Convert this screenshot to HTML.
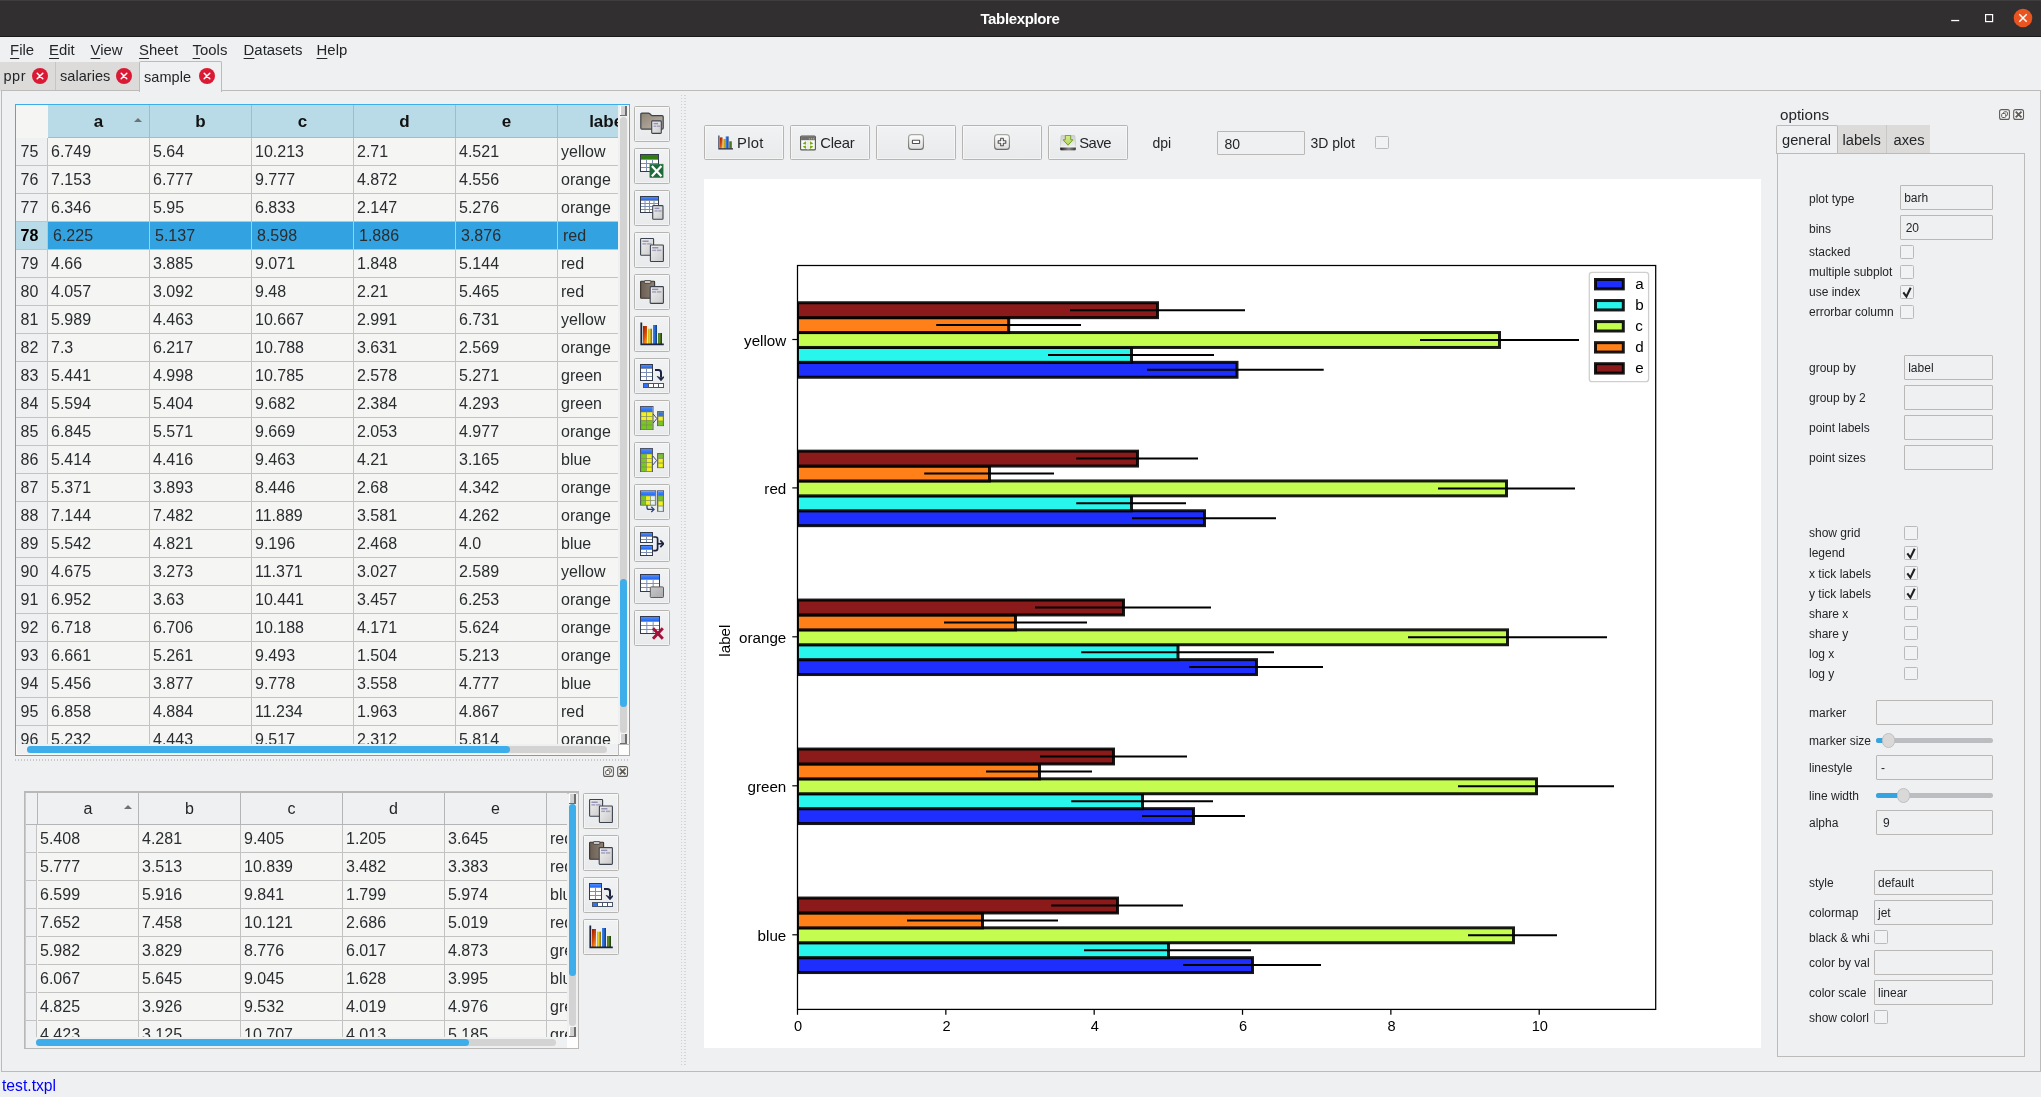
<!DOCTYPE html><html><head><meta charset="utf-8"><title>Tablexplore</title><style>
html,body{margin:0;padding:0;}
body{width:2041px;height:1097px;position:relative;overflow:hidden;background:#eff0f1;font-family:"Liberation Sans",sans-serif;color:#232629;}
div{position:absolute;box-sizing:content-box;}
.abs{position:absolute;}
.clip{overflow:hidden;}
.t{position:absolute;white-space:nowrap;line-height:1.15;}
#titlebar{left:0;top:0;width:2041px;height:36px;background:#312f30;border-bottom:1px solid #1b1a1b;box-shadow:inset 0 1px 0 0 #3f3d3e;}
#title{left:0;width:2040px;top:9.5px;text-align:center;color:#fff;font-weight:bold;font-size:15px;line-height:18px;letter-spacing:-0.35px;}
.menu{font-size:14.9px;color:#232629;}
.menu u{text-decoration-thickness:1px;text-underline-offset:2.6px;}
.tab{font-size:14.5px;color:#232629;}
.th{position:absolute;text-align:center;border-right:1px solid #b4b5b6;border-bottom:1px solid #b4b5b6;color:#111;overflow:hidden;}
.th.main{font-weight:bold;font-size:17px;}
.th.sub{font-size:16px;color:#232629;}
.td{position:absolute;font-size:16px;line-height:28px;border-right:1px solid #c3c3c3;border-bottom:1px solid #c3c3c3;box-sizing:border-box;color:#2a2d30;white-space:nowrap;overflow:hidden;}
.rh{position:absolute;font-size:16px;line-height:28px;border-right:1px solid #c3c3c3;border-bottom:1px solid #c3c3c3;text-align:left;padding-left:4.6px;box-sizing:border-box;color:#2a2d30;}
.rh.b{font-weight:bold;color:#000;}
.tbtn{background:linear-gradient(#f1f2f3,#e9eaeb);border:1px solid #b7b5b2;border-radius:1.5px;box-shadow:inset 0 0 0 1px rgba(255,255,255,0.45);box-sizing:border-box;}
.pbtn{background:linear-gradient(#f1f2f3,#e9eaeb);border:1px solid #b7b5b2;border-radius:1.5px;box-shadow:inset 0 0 0 1px rgba(255,255,255,0.45);box-sizing:border-box;}
.pbt{font-size:14.8px;color:#232629;}
.opt{font-size:12px;color:#232629;}
.opt2{font-size:14px;color:#232629;}
.optitle{font-size:15.2px;color:#232629;}
.otab{font-size:14.7px;color:#232629;}
.field{border:1px solid #b9b8b6;background:#eff0f1;box-sizing:border-box;border-radius:1px;}
.field span{position:absolute;top:1px;bottom:0;font-size:12px;line-height:22px;color:#232629;white-space:nowrap;}
.chk{border:1px solid #b9babb;background:#f1f2f3;box-sizing:border-box;border-radius:1.5px;}
.status{font-size:15.7px;color:#0000ff;}
svg{display:block;}
svg text{font-family:"Liberation Sans",sans-serif;}
#wrap{left:0;top:0;width:2041px;height:1097px;will-change:transform;}

</style></head><body><div id="wrap">
<svg width="0" height="0" style="position:absolute;left:0;top:0"><defs><linearGradient id="gbh" x1="0" y1="0" x2="0" y2="1"><stop offset="0" stop-color="#4f8dfb"/><stop offset="1" stop-color="#1f63f0"/></linearGradient><linearGradient id="gdoc" x1="0" y1="0" x2="1" y2="1"><stop offset="0" stop-color="#f1f1f1"/><stop offset="1" stop-color="#c9c9c9"/></linearGradient><linearGradient id="gfold" x1="0" y1="0" x2="1" y2="1"><stop offset="0" stop-color="#8f8272"/><stop offset="1" stop-color="#bcb6ad"/></linearGradient><linearGradient id="gclip" x1="0" y1="0" x2="1" y2="0"><stop offset="0" stop-color="#6a5d52"/><stop offset="1" stop-color="#8e8074"/></linearGradient><linearGradient id="gred" x1="0.2" y1="0" x2="0.8" y2="1"><stop offset="0" stop-color="#a32200"/><stop offset="0.55" stop-color="#d8500a"/><stop offset="1" stop-color="#fba31c"/></linearGradient><linearGradient id="gyel" x1="0" y1="0" x2="1" y2="0"><stop offset="0" stop-color="#c8b418"/><stop offset="0.35" stop-color="#e8d02a"/><stop offset="1" stop-color="#7a6a10"/></linearGradient><linearGradient id="gblu" x1="0" y1="0" x2="1" y2="0"><stop offset="0" stop-color="#3a80e8"/><stop offset="0.4" stop-color="#2a6fd8"/><stop offset="1" stop-color="#123a80"/></linearGradient><linearGradient id="ggrn" x1="0" y1="0" x2="1" y2="0"><stop offset="0" stop-color="#4a7a20"/><stop offset="0.4" stop-color="#5a8a28"/><stop offset="1" stop-color="#1c3208"/></linearGradient><linearGradient id="ggray" x1="0" y1="0" x2="1" y2="1"><stop offset="0" stop-color="#c9c9cb"/><stop offset="1" stop-color="#a9a9ab"/></linearGradient><linearGradient id="gbtn" x1="0" y1="0" x2="0" y2="1"><stop offset="0" stop-color="#ffffff"/><stop offset="1" stop-color="#dcdcdc"/></linearGradient><linearGradient id="gsave" x1="0" y1="0" x2="0" y2="1"><stop offset="0" stop-color="#dcea8e"/><stop offset="1" stop-color="#b4d65c"/></linearGradient><linearGradient id="gdrv" x1="0" y1="0" x2="0" y2="1"><stop offset="0" stop-color="#cfcfcf"/><stop offset="0.7" stop-color="#ececec"/><stop offset="1" stop-color="#dddddd"/></linearGradient><linearGradient id="gdrvb" x1="0" y1="0" x2="1" y2="0"><stop offset="0" stop-color="#1e1e1e"/><stop offset="0.55" stop-color="#8a8a8a"/><stop offset="1" stop-color="#3a3a3a"/></linearGradient><linearGradient id="gbtns" x1="0" y1="0" x2="0" y2="1"><stop offset="0" stop-color="#a9a9a4"/><stop offset="1" stop-color="#6a6a64"/></linearGradient></defs></svg>
<div id="titlebar"><div id="title">Tablexplore</div>
<svg class="abs" style="left:1945px;top:4px" width="96" height="30" viewBox="0 0 96 30"><rect x="6.2" y="15.9" width="8" height="1.3" fill="#fff"/><rect x="40.6" y="10.6" width="7" height="7" fill="none" stroke="#fff" stroke-width="1.2"/><circle cx="78" cy="14" r="9.3" fill="#e95420"/><path d="M74.3 10.3 L81.7 17.7 M81.7 10.3 L74.3 17.7" stroke="#fff" stroke-width="1.5" fill="none"/></svg></div>
<div class="t menu" style="left:10.1px;top:42.2px"><u>F</u>ile</div>
<div class="t menu" style="left:49.1px;top:42.2px"><u>E</u>dit</div>
<div class="t menu" style="left:90.6px;top:42.2px"><u>V</u>iew</div>
<div class="t menu" style="left:139.1px;top:42.2px"><u>S</u>heet</div>
<div class="t menu" style="left:192.6px;top:42.2px"><u>T</u>ools</div>
<div class="t menu" style="left:243.6px;top:42.2px"><u>D</u>atasets</div>
<div class="t menu" style="left:316.6px;top:42.2px"><u>H</u>elp</div>
<div style="left:0px;top:62px;width:55px;height:28.5px;background:#dcdbd9;border-right:1px solid #c6c5c3;"></div>
<div style="left:56px;top:62px;width:83px;height:28.5px;background:#dcdbd9;"></div>
<div style="left:1px;top:90px;width:2038px;height:980px;border:1px solid #bcbbb9;background:#eff0f1;"></div>
<div style="left:139px;top:61px;width:80.5px;height:30px;background:#eff0f1;border:1px solid #bcbbb9;border-bottom:none;border-radius:2px 2px 0 0;"></div>
<div class="t tab" style="left:3.5px;top:68.2px;letter-spacing:0.5px">ppr</div>
<div class="t tab" style="left:60.0px;top:68.2px;letter-spacing:0.05px">salaries</div>
<div class="t tab" style="left:144.0px;top:69.2px;letter-spacing:0.05px">sample</div>
<svg class="abs" style="left:31px;top:67.2px" width="18" height="18" viewBox="0 0 18 18"><circle cx="9" cy="9" r="8" fill="#da1a34"/><path d="M6.2 6.2 L11.8 11.8 M11.8 6.2 L6.2 11.8" stroke="#fff" stroke-width="1.5" stroke-linecap="round" fill="none"/></svg>
<svg class="abs" style="left:115px;top:67.2px" width="18" height="18" viewBox="0 0 18 18"><circle cx="9" cy="9" r="8" fill="#da1a34"/><path d="M6.2 6.2 L11.8 11.8 M11.8 6.2 L6.2 11.8" stroke="#fff" stroke-width="1.5" stroke-linecap="round" fill="none"/></svg>
<svg class="abs" style="left:198px;top:67.2px" width="18" height="18" viewBox="0 0 18 18"><circle cx="9" cy="9" r="8" fill="#da1a34"/><path d="M6.2 6.2 L11.8 11.8 M11.8 6.2 L6.2 11.8" stroke="#fff" stroke-width="1.5" stroke-linecap="round" fill="none"/></svg>
<div class="abs" style="left:15px;top:104px;width:613px;height:650px;border:1px solid #3daee9;background:#eff0f1;box-shadow:inset 0 0 0 1px #fbf7f4;"></div>
<div class="abs clip" style="left:16px;top:105px;width:602px;height:639px;background:#f5f5f4;">
<div class="abs" style="left:0;top:0;width:32px;height:33px;background:#f5f5f4;"></div>
<div class="th main" style="left:32px;top:0;width:101px;height:32px;line-height:33px;background:#b9dbe8;">a</div>
<svg class="abs" style="left:117px;top:12px" width="10" height="6" viewBox="0 0 10 6"><path d="M1 5 L5 1 L9 5 Z" fill="#6f7275"/></svg>
<div class="th main" style="left:134px;top:0;width:101px;height:32px;line-height:33px;background:#b9dbe8;">b</div>
<div class="th main" style="left:236px;top:0;width:101px;height:32px;line-height:33px;background:#b9dbe8;">c</div>
<div class="th main" style="left:338px;top:0;width:101px;height:32px;line-height:33px;background:#b9dbe8;">d</div>
<div class="th main" style="left:440px;top:0;width:101px;height:32px;line-height:33px;background:#b9dbe8;">e</div>
<div class="th main" style="left:542px;top:0;width:101px;height:32px;line-height:33px;background:#b9dbe8;">label</div>
<div class="rh" style="left:0;top:33px;width:32px;height:28px;background:#eff0f1;">75</div>
<div class="td" style="left:32px;top:33px;width:102px;height:28px;padding-left:3px;">6.749</div>
<div class="td" style="left:134px;top:33px;width:102px;height:28px;padding-left:3px;">5.64</div>
<div class="td" style="left:236px;top:33px;width:102px;height:28px;padding-left:3px;">10.213</div>
<div class="td" style="left:338px;top:33px;width:102px;height:28px;padding-left:3px;">2.71</div>
<div class="td" style="left:440px;top:33px;width:102px;height:28px;padding-left:3px;">4.521</div>
<div class="td" style="left:542px;top:33px;width:102px;height:28px;padding-left:3px;">yellow</div>
<div class="rh" style="left:0;top:61px;width:32px;height:28px;background:#eff0f1;">76</div>
<div class="td" style="left:32px;top:61px;width:102px;height:28px;padding-left:3px;">7.153</div>
<div class="td" style="left:134px;top:61px;width:102px;height:28px;padding-left:3px;">6.777</div>
<div class="td" style="left:236px;top:61px;width:102px;height:28px;padding-left:3px;">9.777</div>
<div class="td" style="left:338px;top:61px;width:102px;height:28px;padding-left:3px;">4.872</div>
<div class="td" style="left:440px;top:61px;width:102px;height:28px;padding-left:3px;">4.556</div>
<div class="td" style="left:542px;top:61px;width:102px;height:28px;padding-left:3px;">orange</div>
<div class="rh" style="left:0;top:89px;width:32px;height:28px;background:#eff0f1;">77</div>
<div class="td" style="left:32px;top:89px;width:102px;height:28px;padding-left:3px;">6.346</div>
<div class="td" style="left:134px;top:89px;width:102px;height:28px;padding-left:3px;">5.95</div>
<div class="td" style="left:236px;top:89px;width:102px;height:28px;padding-left:3px;">6.833</div>
<div class="td" style="left:338px;top:89px;width:102px;height:28px;padding-left:3px;">2.147</div>
<div class="td" style="left:440px;top:89px;width:102px;height:28px;padding-left:3px;">5.276</div>
<div class="td" style="left:542px;top:89px;width:102px;height:28px;padding-left:3px;">orange</div>
<div class="rh b" style="left:0;top:117px;width:32px;height:28px;background:#b9dbe8;">78</div>
<div class="td" style="left:32px;top:117px;width:102px;height:28px;background:#33a2e0;padding-left:5px;">6.225</div>
<div class="td" style="left:134px;top:117px;width:102px;height:28px;background:#33a2e0;padding-left:5px;">5.137</div>
<div class="td" style="left:236px;top:117px;width:102px;height:28px;background:#33a2e0;padding-left:5px;">8.598</div>
<div class="td" style="left:338px;top:117px;width:102px;height:28px;background:#33a2e0;padding-left:5px;">1.886</div>
<div class="td" style="left:440px;top:117px;width:102px;height:28px;background:#33a2e0;padding-left:5px;">3.876</div>
<div class="td" style="left:542px;top:117px;width:102px;height:28px;background:#33a2e0;padding-left:5px;">red</div>
<div class="rh" style="left:0;top:145px;width:32px;height:28px;background:#eff0f1;">79</div>
<div class="td" style="left:32px;top:145px;width:102px;height:28px;padding-left:3px;">4.66</div>
<div class="td" style="left:134px;top:145px;width:102px;height:28px;padding-left:3px;">3.885</div>
<div class="td" style="left:236px;top:145px;width:102px;height:28px;padding-left:3px;">9.071</div>
<div class="td" style="left:338px;top:145px;width:102px;height:28px;padding-left:3px;">1.848</div>
<div class="td" style="left:440px;top:145px;width:102px;height:28px;padding-left:3px;">5.144</div>
<div class="td" style="left:542px;top:145px;width:102px;height:28px;padding-left:3px;">red</div>
<div class="rh" style="left:0;top:173px;width:32px;height:28px;background:#eff0f1;">80</div>
<div class="td" style="left:32px;top:173px;width:102px;height:28px;padding-left:3px;">4.057</div>
<div class="td" style="left:134px;top:173px;width:102px;height:28px;padding-left:3px;">3.092</div>
<div class="td" style="left:236px;top:173px;width:102px;height:28px;padding-left:3px;">9.48</div>
<div class="td" style="left:338px;top:173px;width:102px;height:28px;padding-left:3px;">2.21</div>
<div class="td" style="left:440px;top:173px;width:102px;height:28px;padding-left:3px;">5.465</div>
<div class="td" style="left:542px;top:173px;width:102px;height:28px;padding-left:3px;">red</div>
<div class="rh" style="left:0;top:201px;width:32px;height:28px;background:#eff0f1;">81</div>
<div class="td" style="left:32px;top:201px;width:102px;height:28px;padding-left:3px;">5.989</div>
<div class="td" style="left:134px;top:201px;width:102px;height:28px;padding-left:3px;">4.463</div>
<div class="td" style="left:236px;top:201px;width:102px;height:28px;padding-left:3px;">10.667</div>
<div class="td" style="left:338px;top:201px;width:102px;height:28px;padding-left:3px;">2.991</div>
<div class="td" style="left:440px;top:201px;width:102px;height:28px;padding-left:3px;">6.731</div>
<div class="td" style="left:542px;top:201px;width:102px;height:28px;padding-left:3px;">yellow</div>
<div class="rh" style="left:0;top:229px;width:32px;height:28px;background:#eff0f1;">82</div>
<div class="td" style="left:32px;top:229px;width:102px;height:28px;padding-left:3px;">7.3</div>
<div class="td" style="left:134px;top:229px;width:102px;height:28px;padding-left:3px;">6.217</div>
<div class="td" style="left:236px;top:229px;width:102px;height:28px;padding-left:3px;">10.788</div>
<div class="td" style="left:338px;top:229px;width:102px;height:28px;padding-left:3px;">3.631</div>
<div class="td" style="left:440px;top:229px;width:102px;height:28px;padding-left:3px;">2.569</div>
<div class="td" style="left:542px;top:229px;width:102px;height:28px;padding-left:3px;">orange</div>
<div class="rh" style="left:0;top:257px;width:32px;height:28px;background:#eff0f1;">83</div>
<div class="td" style="left:32px;top:257px;width:102px;height:28px;padding-left:3px;">5.441</div>
<div class="td" style="left:134px;top:257px;width:102px;height:28px;padding-left:3px;">4.998</div>
<div class="td" style="left:236px;top:257px;width:102px;height:28px;padding-left:3px;">10.785</div>
<div class="td" style="left:338px;top:257px;width:102px;height:28px;padding-left:3px;">2.578</div>
<div class="td" style="left:440px;top:257px;width:102px;height:28px;padding-left:3px;">5.271</div>
<div class="td" style="left:542px;top:257px;width:102px;height:28px;padding-left:3px;">green</div>
<div class="rh" style="left:0;top:285px;width:32px;height:28px;background:#eff0f1;">84</div>
<div class="td" style="left:32px;top:285px;width:102px;height:28px;padding-left:3px;">5.594</div>
<div class="td" style="left:134px;top:285px;width:102px;height:28px;padding-left:3px;">5.404</div>
<div class="td" style="left:236px;top:285px;width:102px;height:28px;padding-left:3px;">9.682</div>
<div class="td" style="left:338px;top:285px;width:102px;height:28px;padding-left:3px;">2.384</div>
<div class="td" style="left:440px;top:285px;width:102px;height:28px;padding-left:3px;">4.293</div>
<div class="td" style="left:542px;top:285px;width:102px;height:28px;padding-left:3px;">green</div>
<div class="rh" style="left:0;top:313px;width:32px;height:28px;background:#eff0f1;">85</div>
<div class="td" style="left:32px;top:313px;width:102px;height:28px;padding-left:3px;">6.845</div>
<div class="td" style="left:134px;top:313px;width:102px;height:28px;padding-left:3px;">5.571</div>
<div class="td" style="left:236px;top:313px;width:102px;height:28px;padding-left:3px;">9.669</div>
<div class="td" style="left:338px;top:313px;width:102px;height:28px;padding-left:3px;">2.053</div>
<div class="td" style="left:440px;top:313px;width:102px;height:28px;padding-left:3px;">4.977</div>
<div class="td" style="left:542px;top:313px;width:102px;height:28px;padding-left:3px;">orange</div>
<div class="rh" style="left:0;top:341px;width:32px;height:28px;background:#eff0f1;">86</div>
<div class="td" style="left:32px;top:341px;width:102px;height:28px;padding-left:3px;">5.414</div>
<div class="td" style="left:134px;top:341px;width:102px;height:28px;padding-left:3px;">4.416</div>
<div class="td" style="left:236px;top:341px;width:102px;height:28px;padding-left:3px;">9.463</div>
<div class="td" style="left:338px;top:341px;width:102px;height:28px;padding-left:3px;">4.21</div>
<div class="td" style="left:440px;top:341px;width:102px;height:28px;padding-left:3px;">3.165</div>
<div class="td" style="left:542px;top:341px;width:102px;height:28px;padding-left:3px;">blue</div>
<div class="rh" style="left:0;top:369px;width:32px;height:28px;background:#eff0f1;">87</div>
<div class="td" style="left:32px;top:369px;width:102px;height:28px;padding-left:3px;">5.371</div>
<div class="td" style="left:134px;top:369px;width:102px;height:28px;padding-left:3px;">3.893</div>
<div class="td" style="left:236px;top:369px;width:102px;height:28px;padding-left:3px;">8.446</div>
<div class="td" style="left:338px;top:369px;width:102px;height:28px;padding-left:3px;">2.68</div>
<div class="td" style="left:440px;top:369px;width:102px;height:28px;padding-left:3px;">4.342</div>
<div class="td" style="left:542px;top:369px;width:102px;height:28px;padding-left:3px;">orange</div>
<div class="rh" style="left:0;top:397px;width:32px;height:28px;background:#eff0f1;">88</div>
<div class="td" style="left:32px;top:397px;width:102px;height:28px;padding-left:3px;">7.144</div>
<div class="td" style="left:134px;top:397px;width:102px;height:28px;padding-left:3px;">7.482</div>
<div class="td" style="left:236px;top:397px;width:102px;height:28px;padding-left:3px;">11.889</div>
<div class="td" style="left:338px;top:397px;width:102px;height:28px;padding-left:3px;">3.581</div>
<div class="td" style="left:440px;top:397px;width:102px;height:28px;padding-left:3px;">4.262</div>
<div class="td" style="left:542px;top:397px;width:102px;height:28px;padding-left:3px;">orange</div>
<div class="rh" style="left:0;top:425px;width:32px;height:28px;background:#eff0f1;">89</div>
<div class="td" style="left:32px;top:425px;width:102px;height:28px;padding-left:3px;">5.542</div>
<div class="td" style="left:134px;top:425px;width:102px;height:28px;padding-left:3px;">4.821</div>
<div class="td" style="left:236px;top:425px;width:102px;height:28px;padding-left:3px;">9.196</div>
<div class="td" style="left:338px;top:425px;width:102px;height:28px;padding-left:3px;">2.468</div>
<div class="td" style="left:440px;top:425px;width:102px;height:28px;padding-left:3px;">4.0</div>
<div class="td" style="left:542px;top:425px;width:102px;height:28px;padding-left:3px;">blue</div>
<div class="rh" style="left:0;top:453px;width:32px;height:28px;background:#eff0f1;">90</div>
<div class="td" style="left:32px;top:453px;width:102px;height:28px;padding-left:3px;">4.675</div>
<div class="td" style="left:134px;top:453px;width:102px;height:28px;padding-left:3px;">3.273</div>
<div class="td" style="left:236px;top:453px;width:102px;height:28px;padding-left:3px;">11.371</div>
<div class="td" style="left:338px;top:453px;width:102px;height:28px;padding-left:3px;">3.027</div>
<div class="td" style="left:440px;top:453px;width:102px;height:28px;padding-left:3px;">2.589</div>
<div class="td" style="left:542px;top:453px;width:102px;height:28px;padding-left:3px;">yellow</div>
<div class="rh" style="left:0;top:481px;width:32px;height:28px;background:#eff0f1;">91</div>
<div class="td" style="left:32px;top:481px;width:102px;height:28px;padding-left:3px;">6.952</div>
<div class="td" style="left:134px;top:481px;width:102px;height:28px;padding-left:3px;">3.63</div>
<div class="td" style="left:236px;top:481px;width:102px;height:28px;padding-left:3px;">10.441</div>
<div class="td" style="left:338px;top:481px;width:102px;height:28px;padding-left:3px;">3.457</div>
<div class="td" style="left:440px;top:481px;width:102px;height:28px;padding-left:3px;">6.253</div>
<div class="td" style="left:542px;top:481px;width:102px;height:28px;padding-left:3px;">orange</div>
<div class="rh" style="left:0;top:509px;width:32px;height:28px;background:#eff0f1;">92</div>
<div class="td" style="left:32px;top:509px;width:102px;height:28px;padding-left:3px;">6.718</div>
<div class="td" style="left:134px;top:509px;width:102px;height:28px;padding-left:3px;">6.706</div>
<div class="td" style="left:236px;top:509px;width:102px;height:28px;padding-left:3px;">10.188</div>
<div class="td" style="left:338px;top:509px;width:102px;height:28px;padding-left:3px;">4.171</div>
<div class="td" style="left:440px;top:509px;width:102px;height:28px;padding-left:3px;">5.624</div>
<div class="td" style="left:542px;top:509px;width:102px;height:28px;padding-left:3px;">orange</div>
<div class="rh" style="left:0;top:537px;width:32px;height:28px;background:#eff0f1;">93</div>
<div class="td" style="left:32px;top:537px;width:102px;height:28px;padding-left:3px;">6.661</div>
<div class="td" style="left:134px;top:537px;width:102px;height:28px;padding-left:3px;">5.261</div>
<div class="td" style="left:236px;top:537px;width:102px;height:28px;padding-left:3px;">9.493</div>
<div class="td" style="left:338px;top:537px;width:102px;height:28px;padding-left:3px;">1.504</div>
<div class="td" style="left:440px;top:537px;width:102px;height:28px;padding-left:3px;">5.213</div>
<div class="td" style="left:542px;top:537px;width:102px;height:28px;padding-left:3px;">orange</div>
<div class="rh" style="left:0;top:565px;width:32px;height:28px;background:#eff0f1;">94</div>
<div class="td" style="left:32px;top:565px;width:102px;height:28px;padding-left:3px;">5.456</div>
<div class="td" style="left:134px;top:565px;width:102px;height:28px;padding-left:3px;">3.877</div>
<div class="td" style="left:236px;top:565px;width:102px;height:28px;padding-left:3px;">9.778</div>
<div class="td" style="left:338px;top:565px;width:102px;height:28px;padding-left:3px;">3.558</div>
<div class="td" style="left:440px;top:565px;width:102px;height:28px;padding-left:3px;">4.777</div>
<div class="td" style="left:542px;top:565px;width:102px;height:28px;padding-left:3px;">blue</div>
<div class="rh" style="left:0;top:593px;width:32px;height:28px;background:#eff0f1;">95</div>
<div class="td" style="left:32px;top:593px;width:102px;height:28px;padding-left:3px;">6.858</div>
<div class="td" style="left:134px;top:593px;width:102px;height:28px;padding-left:3px;">4.884</div>
<div class="td" style="left:236px;top:593px;width:102px;height:28px;padding-left:3px;">11.234</div>
<div class="td" style="left:338px;top:593px;width:102px;height:28px;padding-left:3px;">1.963</div>
<div class="td" style="left:440px;top:593px;width:102px;height:28px;padding-left:3px;">4.867</div>
<div class="td" style="left:542px;top:593px;width:102px;height:28px;padding-left:3px;">red</div>
<div class="rh" style="left:0;top:621px;width:32px;height:28px;background:#eff0f1;">96</div>
<div class="td" style="left:32px;top:621px;width:102px;height:28px;padding-left:3px;">5.232</div>
<div class="td" style="left:134px;top:621px;width:102px;height:28px;padding-left:3px;">4.443</div>
<div class="td" style="left:236px;top:621px;width:102px;height:28px;padding-left:3px;">9.517</div>
<div class="td" style="left:338px;top:621px;width:102px;height:28px;padding-left:3px;">2.312</div>
<div class="td" style="left:440px;top:621px;width:102px;height:28px;padding-left:3px;">5.814</div>
<div class="td" style="left:542px;top:621px;width:102px;height:28px;padding-left:3px;">orange</div>
</div>
<div style="left:620px;top:116.5px;width:7px;height:616.5px;background:#d3d3d3;border-radius:3.5px;"></div>
<div style="left:620px;top:579px;width:7px;height:128px;background:#3daee9;border-radius:3.5px;"></div>
<div style="left:620px;top:105px;width:7px;height:11px;background:linear-gradient(90deg,#ffffff 0,#ffffff 1.2px,#d2d2d2 1.2px,#cfcfcf 4.6px,#6e6e6e 4.6px);border-bottom:1.4px solid #6e6e6e;border-top:1px solid #f4f4f4;box-sizing:border-box;"></div>
<div style="left:620px;top:733px;width:7px;height:11px;background:linear-gradient(90deg,#ffffff 0,#ffffff 1.2px,#d2d2d2 1.2px,#cfcfcf 4.6px,#6e6e6e 4.6px);border-bottom:1.4px solid #6e6e6e;border-top:1px solid #f4f4f4;box-sizing:border-box;"></div>
<div style="left:27px;top:746px;width:580px;height:7px;background:#d3d3d3;border-radius:3.5px;"></div>
<div style="left:27px;top:746px;width:483px;height:7px;background:#3daee9;border-radius:3.5px;"></div>
<div style="left:618px;top:744px;width:12px;height:12px;background:#fdfdfd;border:1px solid #b9b9b9;border-right-color:#8fb0c8;border-bottom-color:#8fb0c8;box-sizing:border-box;"></div>
<div class="tbtn" style="left:634px;top:106px;width:36px;height:35.5px;"><svg style="position:absolute;left:5px;top:4.6px" width="24" height="24" viewBox="0 0 24 24"><path d="M0.8 2.2 Q0.8 1.1 1.9 1.1 H8.3 Q9.2 1.1 9.9 1.8 L11.4 3.2 Q12 3.7 12.8 3.7 H22.1 Q23.2 3.7 23.2 4.8 V16 Q23.2 17.1 22.1 17.1 H1.9 Q0.8 17.1 0.8 16 Z" fill="url(#gfold)" stroke="#3d4249" stroke-width="1.2"/><rect x="11.7" y="8.85" width="9.6" height="12.55" rx="0.8" fill="url(#gdoc)" stroke="#3c424d" stroke-width="1.1"/><rect x="13.5" y="10.85" width="4.6" height="1.5" fill="#9492b4"/><rect x="13.5" y="13.45" width="2.9" height="1.5" fill="#a3a1bf"/><rect x="17.0" y="13.45" width="3.3" height="1.5" fill="#a3a1bf"/></svg></div>
<div class="tbtn" style="left:634px;top:148px;width:36px;height:35.5px;"><svg style="position:absolute;left:5px;top:4.6px" width="24" height="24" viewBox="0 0 24 24"><rect x="0.5" y="0.5" width="18" height="17" fill="#fff" stroke="#343b4a" stroke-width="1"/><rect x="1.0" y="1.0" width="17" height="4.5" fill="#2f7d10"/><line x1="1.0" y1="5.50" x2="18.0" y2="5.50" stroke="#7d90b4" stroke-width="1"/><line x1="1.0" y1="9.50" x2="18.0" y2="9.50" stroke="#7d90b4" stroke-width="1"/><line x1="1.0" y1="13.50" x2="18.0" y2="13.50" stroke="#7d90b4" stroke-width="1"/><line x1="6.50" y1="5.5" x2="6.50" y2="17.0" stroke="#7d90b4" stroke-width="1"/><line x1="12.50" y1="5.5" x2="12.50" y2="17.0" stroke="#7d90b4" stroke-width="1"/><rect x="9.9" y="10.2" width="13.2" height="13.3" fill="#1e6b3a" stroke="#2a7a48" stroke-width="0.6"/><path d="M11.9 11.9 L21.4 22.2 M21.4 11.9 L11.9 22.2" stroke="#fff" stroke-width="2.2" fill="none"/></svg></div>
<div class="tbtn" style="left:634px;top:190px;width:36px;height:35.5px;"><svg style="position:absolute;left:5px;top:4.6px" width="24" height="24" viewBox="0 0 24 24"><rect x="0.5" y="0.5" width="18" height="16" fill="#fff" stroke="#343b4a" stroke-width="1"/><rect x="1.0" y="1.0" width="17" height="3.5" fill="url(#gbh)"/><line x1="1.0" y1="4.50" x2="18.0" y2="4.50" stroke="#7d90b4" stroke-width="1"/><line x1="1.0" y1="7.50" x2="18.0" y2="7.50" stroke="#7d90b4" stroke-width="1"/><line x1="1.0" y1="10.50" x2="18.0" y2="10.50" stroke="#7d90b4" stroke-width="1"/><line x1="1.0" y1="13.50" x2="18.0" y2="13.50" stroke="#7d90b4" stroke-width="1"/><line x1="5.00" y1="4.5" x2="5.00" y2="16.0" stroke="#7d90b4" stroke-width="1"/><line x1="9.50" y1="4.5" x2="9.50" y2="16.0" stroke="#7d90b4" stroke-width="1"/><line x1="14.00" y1="4.5" x2="14.00" y2="16.0" stroke="#7d90b4" stroke-width="1"/><rect x="12.7" y="9.6" width="10.3" height="13.6" rx="0.8" fill="url(#gdoc)" stroke="#3c424d" stroke-width="1.1"/><rect x="14.5" y="11.6" width="4.9" height="1.5" fill="#9492b4"/><rect x="14.5" y="14.2" width="3.1" height="1.5" fill="#a3a1bf"/><rect x="18.2" y="14.2" width="3.5" height="1.5" fill="#a3a1bf"/></svg></div>
<div class="tbtn" style="left:634px;top:232px;width:36px;height:35.5px;"><svg style="position:absolute;left:5px;top:4.6px" width="24" height="24" viewBox="0 0 24 24"><rect x="0.6" y="0.5" width="13" height="16.8" rx="0.8" fill="url(#gdoc)" stroke="#3c424d" stroke-width="1.1"/><rect x="2.4" y="2.5" width="6.2" height="1.5" fill="#9492b4"/><rect x="2.4" y="5.1" width="3.9" height="1.5" fill="#a3a1bf"/><rect x="7.1" y="5.1" width="4.4" height="1.5" fill="#a3a1bf"/><rect x="10.4" y="7" width="13" height="16.5" rx="0.8" fill="url(#gdoc)" stroke="#3c424d" stroke-width="1.1"/><rect x="12.200000000000001" y="9" width="6.2" height="1.5" fill="#9492b4"/><rect x="12.200000000000001" y="11.6" width="3.9" height="1.5" fill="#a3a1bf"/><rect x="16.9" y="11.6" width="4.4" height="1.5" fill="#a3a1bf"/></svg></div>
<div class="tbtn" style="left:634px;top:274px;width:36px;height:35.5px;"><svg style="position:absolute;left:5px;top:4.6px" width="24" height="24" viewBox="0 0 24 24"><rect x="0.6" y="1.2" width="14" height="17" rx="0.7" fill="url(#gclip)" stroke="#3a322c" stroke-width="1.1"/><rect x="4.4" y="0.6" width="6.4" height="2.8" rx="0.6" fill="#cfcfcf" stroke="#3a322c" stroke-width="0.8"/><rect x="10.2" y="6.6" width="13.2" height="16.8" rx="0.8" fill="url(#gdoc)" stroke="#3c424d" stroke-width="1.1"/><rect x="12.0" y="8.6" width="6.3" height="1.5" fill="#9492b4"/><rect x="12.0" y="11.2" width="4.0" height="1.5" fill="#a3a1bf"/><rect x="16.8" y="11.2" width="4.5" height="1.5" fill="#a3a1bf"/></svg></div>
<div class="tbtn" style="left:634px;top:316px;width:36px;height:35.5px;"><svg style="position:absolute;left:5px;top:4.6px" width="24" height="24" viewBox="0 0 24 24"><rect x="3" y="4" width="4" height="18" fill="url(#gred)"/><rect x="8" y="6.7" width="4" height="15.3" fill="url(#gyel)"/><rect x="13" y="3" width="4" height="19" fill="url(#gblu)"/><rect x="18" y="11" width="4" height="11" fill="url(#ggrn)"/><path d="M1.3 0.5 V22.4 H23.8" fill="none" stroke="#1c2340" stroke-width="1.8"/></svg></div>
<div class="tbtn" style="left:634px;top:358px;width:36px;height:35.5px;"><svg style="position:absolute;left:5px;top:4.6px" width="24" height="24" viewBox="0 0 24 24"><rect x="0.5" y="0.5" width="12" height="16" fill="#fff" stroke="#343b4a" stroke-width="1"/><rect x="1.0" y="1.0" width="11" height="3.5" fill="url(#gbh)"/><line x1="1.0" y1="4.50" x2="12.0" y2="4.50" stroke="#7d90b4" stroke-width="1"/><line x1="1.0" y1="8.50" x2="12.0" y2="8.50" stroke="#7d90b4" stroke-width="1"/><line x1="1.0" y1="12.50" x2="12.0" y2="12.50" stroke="#7d90b4" stroke-width="1"/><line x1="6.50" y1="4.5" x2="6.50" y2="16.0" stroke="#7d90b4" stroke-width="1"/><path d="M15 6 H18.5 Q21 6 21 8.5 V13.5" fill="none" stroke="#1c2340" stroke-width="2"/><path d="M17.2 12.4 L21 16.8 L24.6 12.4 L21 14 Z" fill="#1c2340" stroke="#1c2340" stroke-width="0.8" stroke-linejoin="round"/><rect x="3.5" y="19.5" width="20" height="4" fill="#fff" stroke="#4a5468" stroke-width="1"/><rect x="4" y="20" width="4.5" height="3" fill="#2f72f5"/><path d="M8.5 19.5 V23.5 M13.5 19.5 V23.5 M18.5 19.5 V23.5" stroke="#4a5468" stroke-width="1"/></svg></div>
<div class="tbtn" style="left:634px;top:400px;width:36px;height:35.5px;"><svg style="position:absolute;left:5px;top:4.6px" width="24" height="24" viewBox="0 0 24 24"><rect x="0.5" y="0.5" width="12.5" height="23" fill="#fff" stroke="#4d5566" stroke-width="1"/><rect x="1.0" y="1.0" width="11.5" height="5" fill="url(#gbh)"/><rect x="1.00" y="6.00" width="5.75" height="4.38" fill="#f2f21a" stroke="#7d8a5a" stroke-width="0.6"/><rect x="6.75" y="6.00" width="5.75" height="4.38" fill="#f2f21a" stroke="#7d8a5a" stroke-width="0.6"/><rect x="1.00" y="10.38" width="5.75" height="4.38" fill="#f2f21a" stroke="#7d8a5a" stroke-width="0.6"/><rect x="6.75" y="10.38" width="5.75" height="4.38" fill="#f2f21a" stroke="#7d8a5a" stroke-width="0.6"/><rect x="1.00" y="14.75" width="5.75" height="4.38" fill="#74c81e" stroke="#7d8a5a" stroke-width="0.6"/><rect x="6.75" y="14.75" width="5.75" height="4.38" fill="#74c81e" stroke="#7d8a5a" stroke-width="0.6"/><rect x="1.00" y="19.12" width="5.75" height="4.38" fill="#74c81e" stroke="#7d8a5a" stroke-width="0.6"/><rect x="6.75" y="19.12" width="5.75" height="4.38" fill="#74c81e" stroke="#7d8a5a" stroke-width="0.6"/><path d="M13.2 8 L16.8 12.5 L13.2 17" fill="none" stroke="#2a3070" stroke-width="0.9"/><rect x="17.6" y="5.6" width="6" height="14" fill="#fff" stroke="#4d5566" stroke-width="1"/><rect x="18.10" y="6.10" width="5.00" height="4.50" fill="#2f72f5" stroke="#7d8a5a" stroke-width="0.6"/><rect x="18.10" y="10.60" width="5.00" height="4.50" fill="#f2f21a" stroke="#7d8a5a" stroke-width="0.6"/><rect x="18.10" y="15.10" width="5.00" height="4.50" fill="#74c81e" stroke="#7d8a5a" stroke-width="0.6"/></svg></div>
<div class="tbtn" style="left:634px;top:442px;width:36px;height:35.5px;"><svg style="position:absolute;left:5px;top:4.6px" width="24" height="24" viewBox="0 0 24 24"><rect x="0.5" y="0.5" width="12" height="23" fill="#fff" stroke="#4d5566" stroke-width="1"/><rect x="1.0" y="1.0" width="11" height="5" fill="url(#gbh)"/><rect x="1.00" y="6.00" width="5.50" height="4.38" fill="#74c81e" stroke="#7d8a5a" stroke-width="0.6"/><rect x="6.50" y="6.00" width="5.50" height="4.38" fill="#f2f21a" stroke="#7d8a5a" stroke-width="0.6"/><rect x="1.00" y="10.38" width="5.50" height="4.38" fill="#74c81e" stroke="#7d8a5a" stroke-width="0.6"/><rect x="6.50" y="10.38" width="5.50" height="4.38" fill="#f2f21a" stroke="#7d8a5a" stroke-width="0.6"/><rect x="1.00" y="14.75" width="5.50" height="4.38" fill="#74c81e" stroke="#7d8a5a" stroke-width="0.6"/><rect x="6.50" y="14.75" width="5.50" height="4.38" fill="#f2f21a" stroke="#7d8a5a" stroke-width="0.6"/><rect x="1.00" y="19.12" width="5.50" height="4.38" fill="#74c81e" stroke="#7d8a5a" stroke-width="0.6"/><rect x="6.50" y="19.12" width="5.50" height="4.38" fill="#f2f21a" stroke="#7d8a5a" stroke-width="0.6"/><path d="M12.8 8 L16.6 12.5 L12.8 17" fill="none" stroke="#2a3070" stroke-width="0.9"/><rect x="17.6" y="5.6" width="6" height="14" fill="#fff" stroke="#4d5566" stroke-width="1"/><rect x="18.10" y="6.10" width="5.00" height="4.50" fill="#74c81e" stroke="#7d8a5a" stroke-width="0.6"/><rect x="18.10" y="10.60" width="5.00" height="4.50" fill="#f2f21a" stroke="#7d8a5a" stroke-width="0.6"/><rect x="18.10" y="15.10" width="5.00" height="4.50" fill="#f2f21a" stroke="#7d8a5a" stroke-width="0.6"/></svg></div>
<div class="tbtn" style="left:634px;top:484px;width:36px;height:35.5px;"><svg style="position:absolute;left:5px;top:4.6px" width="24" height="24" viewBox="0 0 24 24"><rect x="0.5" y="0.8" width="15.2" height="14.2" fill="#fff" stroke="#4d5566" stroke-width="1"/><rect x="1.0" y="1.3" width="14.2" height="4.6" fill="url(#gbh)"/><rect x="1.00" y="5.90" width="4.73" height="4.55" fill="#74c81e" stroke="#7d8a5a" stroke-width="0.6"/><rect x="5.73" y="5.90" width="4.73" height="4.55" fill="#f2f21a" stroke="#7d8a5a" stroke-width="0.6"/><rect x="10.47" y="5.90" width="4.73" height="4.55" fill="#e6f0fa" stroke="#7d8a5a" stroke-width="0.6"/><rect x="1.00" y="10.45" width="4.73" height="4.55" fill="#74c81e" stroke="#7d8a5a" stroke-width="0.6"/><rect x="5.73" y="10.45" width="4.73" height="4.55" fill="#f2f21a" stroke="#7d8a5a" stroke-width="0.6"/><rect x="10.47" y="10.45" width="4.73" height="4.55" fill="#e6f0fa" stroke="#7d8a5a" stroke-width="0.6"/><rect x="17.6" y="0.8" width="6" height="20.4" fill="#fff" stroke="#4d5566" stroke-width="1"/><rect x="18.1" y="1.3" width="5" height="4.6" fill="url(#gbh)"/><rect x="18.10" y="5.90" width="5.00" height="5.10" fill="#74c81e" stroke="#7d8a5a" stroke-width="0.6"/><rect x="18.10" y="11.00" width="5.00" height="5.10" fill="#f2f21a" stroke="#7d8a5a" stroke-width="0.6"/><rect x="18.10" y="16.10" width="5.00" height="5.10" fill="#e6f0fa" stroke="#7d8a5a" stroke-width="0.6"/><path d="M7 15.5 V17.5 Q7 19.4 8.9 19.4 H13" fill="none" stroke="#27407a" stroke-width="1.3"/><path d="M11.3 16.8 L14 19.4 L11.3 22" fill="none" stroke="#27407a" stroke-width="1.3"/></svg></div>
<div class="tbtn" style="left:634px;top:526px;width:36px;height:35.5px;"><svg style="position:absolute;left:5px;top:4.6px" width="24" height="24" viewBox="0 0 24 24"><rect x="0.5" y="0.5" width="12" height="10" fill="#fff" stroke="#343b4a" stroke-width="1"/><rect x="1.0" y="1.0" width="11" height="3.5" fill="url(#gbh)"/><line x1="1.0" y1="4.50" x2="12.0" y2="4.50" stroke="#7d90b4" stroke-width="1"/><line x1="1.0" y1="7.50" x2="12.0" y2="7.50" stroke="#7d90b4" stroke-width="1"/><line x1="6.50" y1="4.5" x2="6.50" y2="10.0" stroke="#7d90b4" stroke-width="1"/><rect x="0.5" y="13.5" width="12" height="10" fill="#fff" stroke="#343b4a" stroke-width="1"/><rect x="1.0" y="14.0" width="11" height="3.5" fill="url(#gbh)"/><line x1="1.0" y1="17.50" x2="12.0" y2="17.50" stroke="#7d90b4" stroke-width="1"/><line x1="1.0" y1="20.50" x2="12.0" y2="20.50" stroke="#7d90b4" stroke-width="1"/><line x1="6.50" y1="17.5" x2="6.50" y2="23.0" stroke="#7d90b4" stroke-width="1"/><path d="M13.2 5 H15.6 Q17.6 5 17.6 7 V16.6 Q17.6 18.6 15.6 18.6 H13.2" fill="none" stroke="#1c2340" stroke-width="1.7"/><path d="M17.6 11.8 H23" fill="none" stroke="#1c2340" stroke-width="1.7"/><path d="M20.3 8.4 L23.6 11.8 L20.3 15.2" fill="none" stroke="#1c2340" stroke-width="1.7"/></svg></div>
<div class="tbtn" style="left:634px;top:568px;width:36px;height:35.5px;"><svg style="position:absolute;left:5px;top:4.6px" width="24" height="24" viewBox="0 0 24 24"><rect x="0.5" y="0.5" width="19" height="17" fill="#fff" stroke="#343b4a" stroke-width="1"/><rect x="1.0" y="1.0" width="18" height="4.5" fill="url(#gbh)"/><line x1="1.0" y1="5.50" x2="19.0" y2="5.50" stroke="#7d90b4" stroke-width="1"/><line x1="1.0" y1="9.50" x2="19.0" y2="9.50" stroke="#7d90b4" stroke-width="1"/><line x1="1.0" y1="13.50" x2="19.0" y2="13.50" stroke="#7d90b4" stroke-width="1"/><line x1="6.83" y1="5.5" x2="6.83" y2="17.0" stroke="#7d90b4" stroke-width="1"/><line x1="13.17" y1="5.5" x2="13.17" y2="17.0" stroke="#7d90b4" stroke-width="1"/><rect x="10.3" y="12.9" width="13.2" height="10.6" rx="0.8" fill="url(#ggray)" stroke="#5c5c60" stroke-width="1"/></svg></div>
<div class="tbtn" style="left:634px;top:610px;width:36px;height:35.5px;"><svg style="position:absolute;left:5px;top:4.6px" width="24" height="24" viewBox="0 0 24 24"><rect x="0.5" y="0.5" width="19" height="17" fill="#fff" stroke="#343b4a" stroke-width="1"/><rect x="1.0" y="1.0" width="18" height="4.5" fill="url(#gbh)"/><line x1="1.0" y1="5.50" x2="19.0" y2="5.50" stroke="#7d90b4" stroke-width="1"/><line x1="1.0" y1="9.50" x2="19.0" y2="9.50" stroke="#7d90b4" stroke-width="1"/><line x1="1.0" y1="13.50" x2="19.0" y2="13.50" stroke="#7d90b4" stroke-width="1"/><line x1="6.83" y1="5.5" x2="6.83" y2="17.0" stroke="#7d90b4" stroke-width="1"/><line x1="13.17" y1="5.5" x2="13.17" y2="17.0" stroke="#7d90b4" stroke-width="1"/><path d="M13 12.2 L22.8 22.8 M22.8 12.2 L13 22.8" stroke="#a3123a" stroke-width="2.9" fill="none"/></svg></div>
<div style="left:681px;top:95px;width:1px;height:970px;background-image:linear-gradient(#cfcfcf 0,#cfcfcf 1px,transparent 1px);background-size:100% 3px;"></div>
<div style="left:684px;top:95px;width:2px;height:970px;background-image:linear-gradient(#d6d6d6 0,#d6d6d6 1px,transparent 1px);background-size:100% 3px;"></div>
<div style="left:15px;top:759px;width:615px;height:2px;background-image:linear-gradient(90deg,#c9c9c9 0,#c9c9c9 1px,transparent 1px);background-size:3px 100%;"></div>
<svg class="abs" style="left:603px;top:766px" width="26" height="12" viewBox="0 0 26 12"><rect x="0.6" y="0.6" width="9.8" height="9.8" rx="2" fill="#f7f7f7" stroke="#5f5c58" stroke-width="1.1"/><path d="M4.6 4.4 V3.6 Q4.6 2.8 5.4 2.8 H7.6 Q8.4 2.8 8.4 3.6 V5.8 Q8.4 6.6 7.6 6.6 H6.8" fill="none" stroke="#5f5c58" stroke-width="1"/><rect x="2.7" y="4.5" width="4" height="4" rx="1" fill="#f7f7f7" stroke="#5f5c58" stroke-width="1"/><rect x="14.7" y="0.6" width="9.8" height="9.8" rx="2" fill="#f7f7f7" stroke="#5f5c58" stroke-width="1.1"/><path d="M16.7 2.6 L22.5 8.4 M22.5 2.6 L16.7 8.4" stroke="#5f5c58" stroke-width="1.9" fill="none"/></svg>
<div class="abs" style="left:24px;top:791px;width:553px;height:254.5px;border:1px solid #b9b8b6;border-top:2px solid #b9b8b6;background:#eff0f1;box-shadow:inset 1px 1px 0 0 #cfcecc;"></div>
<div class="abs clip" style="left:25px;top:793px;width:542px;height:244px;background:#f5f5f4;">
<div class="abs" style="left:0;top:0;width:13px;height:32px;background:#eff0f1;border-right:1px solid #b4b5b6;border-bottom:1px solid #b4b5b6;box-sizing:border-box;"></div>
<div class="th sub" style="left:13px;top:0;width:100px;height:31px;line-height:31px;background:#eff0f1;">a</div>
<svg class="abs" style="left:98px;top:11px" width="10" height="6" viewBox="0 0 10 6"><path d="M1 5 L5 1 L9 5 Z" fill="#6f7275"/></svg>
<div class="th sub" style="left:114px;top:0;width:101px;height:31px;line-height:31px;background:#eff0f1;">b</div>
<div class="th sub" style="left:216px;top:0;width:101px;height:31px;line-height:31px;background:#eff0f1;">c</div>
<div class="th sub" style="left:318px;top:0;width:101px;height:31px;line-height:31px;background:#eff0f1;">d</div>
<div class="th sub" style="left:420px;top:0;width:101px;height:31px;line-height:31px;background:#eff0f1;">e</div>
<div class="th sub" style="left:522px;top:0;width:101px;height:31px;line-height:31px;background:#eff0f1;">label</div>
<div class="rh" style="left:0;top:32px;width:12px;height:28px;background:#eff0f1;"></div>
<div class="td" style="left:13px;top:32px;width:101px;height:28px;padding-left:2px;">5.408</div>
<div class="td" style="left:114px;top:32px;width:102px;height:28px;padding-left:3px;">4.281</div>
<div class="td" style="left:216px;top:32px;width:102px;height:28px;padding-left:3px;">9.405</div>
<div class="td" style="left:318px;top:32px;width:102px;height:28px;padding-left:3px;">1.205</div>
<div class="td" style="left:420px;top:32px;width:102px;height:28px;padding-left:3px;">3.645</div>
<div class="td" style="left:522px;top:32px;width:102px;height:28px;padding-left:3px;">red</div>
<div class="rh" style="left:0;top:60px;width:12px;height:28px;background:#eff0f1;"></div>
<div class="td" style="left:13px;top:60px;width:101px;height:28px;padding-left:2px;">5.777</div>
<div class="td" style="left:114px;top:60px;width:102px;height:28px;padding-left:3px;">3.513</div>
<div class="td" style="left:216px;top:60px;width:102px;height:28px;padding-left:3px;">10.839</div>
<div class="td" style="left:318px;top:60px;width:102px;height:28px;padding-left:3px;">3.482</div>
<div class="td" style="left:420px;top:60px;width:102px;height:28px;padding-left:3px;">3.383</div>
<div class="td" style="left:522px;top:60px;width:102px;height:28px;padding-left:3px;">red</div>
<div class="rh" style="left:0;top:88px;width:12px;height:28px;background:#eff0f1;"></div>
<div class="td" style="left:13px;top:88px;width:101px;height:28px;padding-left:2px;">6.599</div>
<div class="td" style="left:114px;top:88px;width:102px;height:28px;padding-left:3px;">5.916</div>
<div class="td" style="left:216px;top:88px;width:102px;height:28px;padding-left:3px;">9.841</div>
<div class="td" style="left:318px;top:88px;width:102px;height:28px;padding-left:3px;">1.799</div>
<div class="td" style="left:420px;top:88px;width:102px;height:28px;padding-left:3px;">5.974</div>
<div class="td" style="left:522px;top:88px;width:102px;height:28px;padding-left:3px;">blue</div>
<div class="rh" style="left:0;top:116px;width:12px;height:28px;background:#eff0f1;"></div>
<div class="td" style="left:13px;top:116px;width:101px;height:28px;padding-left:2px;">7.652</div>
<div class="td" style="left:114px;top:116px;width:102px;height:28px;padding-left:3px;">7.458</div>
<div class="td" style="left:216px;top:116px;width:102px;height:28px;padding-left:3px;">10.121</div>
<div class="td" style="left:318px;top:116px;width:102px;height:28px;padding-left:3px;">2.686</div>
<div class="td" style="left:420px;top:116px;width:102px;height:28px;padding-left:3px;">5.019</div>
<div class="td" style="left:522px;top:116px;width:102px;height:28px;padding-left:3px;">red</div>
<div class="rh" style="left:0;top:144px;width:12px;height:28px;background:#eff0f1;"></div>
<div class="td" style="left:13px;top:144px;width:101px;height:28px;padding-left:2px;">5.982</div>
<div class="td" style="left:114px;top:144px;width:102px;height:28px;padding-left:3px;">3.829</div>
<div class="td" style="left:216px;top:144px;width:102px;height:28px;padding-left:3px;">8.776</div>
<div class="td" style="left:318px;top:144px;width:102px;height:28px;padding-left:3px;">6.017</div>
<div class="td" style="left:420px;top:144px;width:102px;height:28px;padding-left:3px;">4.873</div>
<div class="td" style="left:522px;top:144px;width:102px;height:28px;padding-left:3px;">green</div>
<div class="rh" style="left:0;top:172px;width:12px;height:28px;background:#eff0f1;"></div>
<div class="td" style="left:13px;top:172px;width:101px;height:28px;padding-left:2px;">6.067</div>
<div class="td" style="left:114px;top:172px;width:102px;height:28px;padding-left:3px;">5.645</div>
<div class="td" style="left:216px;top:172px;width:102px;height:28px;padding-left:3px;">9.045</div>
<div class="td" style="left:318px;top:172px;width:102px;height:28px;padding-left:3px;">1.628</div>
<div class="td" style="left:420px;top:172px;width:102px;height:28px;padding-left:3px;">3.995</div>
<div class="td" style="left:522px;top:172px;width:102px;height:28px;padding-left:3px;">blue</div>
<div class="rh" style="left:0;top:200px;width:12px;height:28px;background:#eff0f1;"></div>
<div class="td" style="left:13px;top:200px;width:101px;height:28px;padding-left:2px;">4.825</div>
<div class="td" style="left:114px;top:200px;width:102px;height:28px;padding-left:3px;">3.926</div>
<div class="td" style="left:216px;top:200px;width:102px;height:28px;padding-left:3px;">9.532</div>
<div class="td" style="left:318px;top:200px;width:102px;height:28px;padding-left:3px;">4.019</div>
<div class="td" style="left:420px;top:200px;width:102px;height:28px;padding-left:3px;">4.976</div>
<div class="td" style="left:522px;top:200px;width:102px;height:28px;padding-left:3px;">green</div>
<div class="rh" style="left:0;top:228px;width:12px;height:28px;background:#eff0f1;"></div>
<div class="td" style="left:13px;top:228px;width:101px;height:28px;padding-left:2px;">4.423</div>
<div class="td" style="left:114px;top:228px;width:102px;height:28px;padding-left:3px;">3.125</div>
<div class="td" style="left:216px;top:228px;width:102px;height:28px;padding-left:3px;">10.707</div>
<div class="td" style="left:318px;top:228px;width:102px;height:28px;padding-left:3px;">4.013</div>
<div class="td" style="left:420px;top:228px;width:102px;height:28px;padding-left:3px;">5.185</div>
<div class="td" style="left:522px;top:228px;width:102px;height:28px;padding-left:3px;">green</div>
</div>
<div style="left:25px;top:793px;width:1px;height:254px;background:#cbcac8;"></div>
<div style="left:569px;top:804px;width:7px;height:222px;background:#d3d3d3;border-radius:3.5px;"></div>
<div style="left:569px;top:804px;width:7px;height:172px;background:#3daee9;border-radius:3.5px;"></div>
<div style="left:569px;top:793px;width:7px;height:11px;background:linear-gradient(90deg,#ffffff 0,#ffffff 1.2px,#d2d2d2 1.2px,#cfcfcf 4.6px,#6e6e6e 4.6px);border-bottom:1.4px solid #6e6e6e;border-top:1px solid #f4f4f4;box-sizing:border-box;"></div>
<div style="left:569px;top:1026px;width:7px;height:11px;background:linear-gradient(90deg,#ffffff 0,#ffffff 1.2px,#d2d2d2 1.2px,#cfcfcf 4.6px,#6e6e6e 4.6px);border-bottom:1.4px solid #6e6e6e;border-top:1px solid #f4f4f4;box-sizing:border-box;"></div>
<div style="left:36px;top:1039px;width:520px;height:7px;background:#d3d3d3;border-radius:3.5px;"></div>
<div style="left:36px;top:1039px;width:433px;height:7px;background:#3daee9;border-radius:3.5px;"></div>
<div style="left:567px;top:1037px;width:11px;height:10.5px;background:#fdfdfd;"></div>
<div class="tbtn" style="left:583px;top:793px;width:36px;height:35.5px;"><svg style="position:absolute;left:5px;top:4.6px" width="24" height="24" viewBox="0 0 24 24"><rect x="0.6" y="0.5" width="13" height="16.8" rx="0.8" fill="url(#gdoc)" stroke="#3c424d" stroke-width="1.1"/><rect x="2.4" y="2.5" width="6.2" height="1.5" fill="#9492b4"/><rect x="2.4" y="5.1" width="3.9" height="1.5" fill="#a3a1bf"/><rect x="7.1" y="5.1" width="4.4" height="1.5" fill="#a3a1bf"/><rect x="10.4" y="7" width="13" height="16.5" rx="0.8" fill="url(#gdoc)" stroke="#3c424d" stroke-width="1.1"/><rect x="12.200000000000001" y="9" width="6.2" height="1.5" fill="#9492b4"/><rect x="12.200000000000001" y="11.6" width="3.9" height="1.5" fill="#a3a1bf"/><rect x="16.9" y="11.6" width="4.4" height="1.5" fill="#a3a1bf"/></svg></div>
<div class="tbtn" style="left:583px;top:835px;width:36px;height:35.5px;"><svg style="position:absolute;left:5px;top:4.6px" width="24" height="24" viewBox="0 0 24 24"><rect x="0.6" y="1.2" width="14" height="17" rx="0.7" fill="url(#gclip)" stroke="#3a322c" stroke-width="1.1"/><rect x="4.4" y="0.6" width="6.4" height="2.8" rx="0.6" fill="#cfcfcf" stroke="#3a322c" stroke-width="0.8"/><rect x="10.2" y="6.6" width="13.2" height="16.8" rx="0.8" fill="url(#gdoc)" stroke="#3c424d" stroke-width="1.1"/><rect x="12.0" y="8.6" width="6.3" height="1.5" fill="#9492b4"/><rect x="12.0" y="11.2" width="4.0" height="1.5" fill="#a3a1bf"/><rect x="16.8" y="11.2" width="4.5" height="1.5" fill="#a3a1bf"/></svg></div>
<div class="tbtn" style="left:583px;top:877px;width:36px;height:35.5px;"><svg style="position:absolute;left:5px;top:4.6px" width="24" height="24" viewBox="0 0 24 24"><rect x="0.5" y="0.5" width="12" height="16" fill="#fff" stroke="#343b4a" stroke-width="1"/><rect x="1.0" y="1.0" width="11" height="3.5" fill="url(#gbh)"/><line x1="1.0" y1="4.50" x2="12.0" y2="4.50" stroke="#7d90b4" stroke-width="1"/><line x1="1.0" y1="8.50" x2="12.0" y2="8.50" stroke="#7d90b4" stroke-width="1"/><line x1="1.0" y1="12.50" x2="12.0" y2="12.50" stroke="#7d90b4" stroke-width="1"/><line x1="6.50" y1="4.5" x2="6.50" y2="16.0" stroke="#7d90b4" stroke-width="1"/><path d="M15 6 H18.5 Q21 6 21 8.5 V13.5" fill="none" stroke="#1c2340" stroke-width="2"/><path d="M17.2 12.4 L21 16.8 L24.6 12.4 L21 14 Z" fill="#1c2340" stroke="#1c2340" stroke-width="0.8" stroke-linejoin="round"/><rect x="3.5" y="19.5" width="20" height="4" fill="#fff" stroke="#4a5468" stroke-width="1"/><rect x="4" y="20" width="4.5" height="3" fill="#2f72f5"/><path d="M8.5 19.5 V23.5 M13.5 19.5 V23.5 M18.5 19.5 V23.5" stroke="#4a5468" stroke-width="1"/></svg></div>
<div class="tbtn" style="left:583px;top:919px;width:36px;height:35.5px;"><svg style="position:absolute;left:5px;top:4.6px" width="24" height="24" viewBox="0 0 24 24"><rect x="3" y="4" width="4" height="18" fill="url(#gred)"/><rect x="8" y="6.7" width="4" height="15.3" fill="url(#gyel)"/><rect x="13" y="3" width="4" height="19" fill="url(#gblu)"/><rect x="18" y="11" width="4" height="11" fill="url(#ggrn)"/><path d="M1.3 0.5 V22.4 H23.8" fill="none" stroke="#1c2340" stroke-width="1.8"/></svg></div>
<div class="pbtn" style="left:704px;top:125px;width:79.5px;height:35px;"></div>
<svg style="position:absolute;left:717.5px;top:134.5px" width="16" height="16" viewBox="0 0 16 16"><rect x="1.9" y="2.4" width="2.7" height="11.3" fill="url(#gred)"/><rect x="4.8" y="4" width="2.7" height="9.7" fill="url(#gyel)"/><rect x="7.7" y="1.4" width="2.9" height="12.3" fill="url(#gblu)"/><rect x="11.2" y="6.3" width="2.4" height="7.4" fill="url(#ggrn)"/><path d="M0.9 0.6 V13.9 H15" fill="none" stroke="#232a45" stroke-width="1.1"/></svg>
<div class="t pbt" style="left:737px;top:135.1px;letter-spacing:0.3px">Plot</div>
<div class="pbtn" style="left:790.3px;top:125px;width:79.5px;height:35px;"></div>
<svg style="position:absolute;left:800px;top:134.5px" width="16" height="16" viewBox="0 0 16 16"><rect x="0.6" y="1.1" width="14.8" height="13.8" rx="1" fill="#fbfbfb" stroke="#55564f" stroke-width="1.1"/><rect x="1.1" y="1.6" width="13.8" height="3.6" fill="#6e6e6e"/><circle cx="9.4" cy="3.8" r="0.65" fill="#f8b93a"/><circle cx="11.45" cy="3.8" r="0.65" fill="#f8b93a"/><circle cx="13.5" cy="3.8" r="0.65" fill="#f8b93a"/><rect x="7.2" y="5.4" width="1.6" height="9" fill="#e6e6e8"/><path d="M2.8 8.6 L5.9 6.4 V9.5 Z M13.2 8.6 L10.1 6.4 V9.5 Z M2.8 11.6 L5.9 13.8 V10.7 Z M13.2 11.6 L10.1 13.8 V10.7 Z" fill="#6fa800" stroke="#6fa800" stroke-width="0.3" stroke-linejoin="round"/></svg>
<div class="t pbt" style="left:820.2px;top:135.1px;letter-spacing:-0.2px">Clear</div>
<div class="pbtn" style="left:876.2px;top:125px;width:79.5px;height:35px;"></div>
<svg style="position:absolute;left:908px;top:133.8px" width="16" height="16" viewBox="0 0 16 16"><rect x="0.6" y="0.6" width="14.8" height="14.8" rx="3" fill="url(#gbtn)" stroke="url(#gbtns)" stroke-width="1.1"/><rect x="4.4" y="6.3" width="7.2" height="3.2" rx="0.4" fill="#fff" stroke="#4f4f4f" stroke-width="1.1"/></svg>
<div class="pbtn" style="left:962.2px;top:125px;width:79.5px;height:35px;"></div>
<svg style="position:absolute;left:994.2px;top:133.8px" width="16" height="16" viewBox="0 0 16 16"><rect x="0.6" y="0.6" width="14.8" height="14.8" rx="3" fill="url(#gbtn)" stroke="url(#gbtns)" stroke-width="1.1"/><path d="M6.7 4.2 h2.6 v2.5 h2.5 v2.6 h-2.5 v2.5 h-2.6 v-2.5 h-2.5 v-2.6 h2.5z" fill="#fff" stroke="#4f4f4f" stroke-width="1.1" stroke-linejoin="round"/></svg>
<div class="pbtn" style="left:1048.2px;top:125px;width:79.5px;height:35px;"></div>
<svg style="position:absolute;left:1060px;top:134.5px" width="16" height="16" viewBox="0 0 16 16"><path d="M2.2 0.3 H13.8 Q14.6 0.3 14.8 1.1 L16 11.5 V14.2 Q16 15.2 15 15.2 H1 Q0 15.2 0 14.2 V11.5 L1.2 1.1 Q1.4 0.3 2.2 0.3 Z" fill="url(#gdrv)" stroke="#bdbdbd" stroke-width="0.6"/><rect x="0.3" y="11.6" width="15.4" height="1" fill="#fdfdfd"/><path d="M0.2 12.5 H15.8 V14.2 Q15.8 15.2 14.8 15.2 H1.2 Q0.2 15.2 0.2 14.2 Z" fill="url(#gdrvb)"/><path d="M5.3 0.4 H10.7 V4.8 H12.9 L8 10.2 L3.1 4.8 H5.3 Z" fill="url(#gsave)" stroke="#6aa32a" stroke-width="1" stroke-linejoin="round"/></svg>
<div class="t pbt" style="left:1079.2px;top:135.1px;letter-spacing:-0.45px">Save</div>
<div class="t opt2" style="left:1152.5px;top:134.7px">dpi</div>
<div class="field" style="left:1217px;top:131px;width:87.5px;height:23.5px;"><span style="left:6.5px;font-size:14px;line-height:23px">80</span></div>
<div class="t opt2" style="left:1310.5px;top:134.7px">3D plot</div>
<div class="chk" style="left:1375.2px;top:135.5px;width:13.5px;height:13.5px;"></div>
<svg style="position:absolute;left:704px;top:179px" width="1057" height="869" viewBox="704 179 1057 869">
<rect x="704" y="179" width="1057" height="869" fill="#fff"/>
<clipPath id="axclip"><rect x="797.5" y="265.5" width="858.20" height="743.90"/></clipPath>
<g clip-path="url(#axclip)">
<rect x="797.5" y="362.35" width="439.50" height="14.9" fill="#1e2ffd" stroke="#000" stroke-opacity="0.9" stroke-width="3.0"/>
<rect x="797.5" y="347.45" width="334.00" height="14.9" fill="#28f5ec" stroke="#000" stroke-opacity="0.9" stroke-width="3.0"/>
<rect x="797.5" y="332.55" width="702.00" height="14.9" fill="#c4fd50" stroke="#000" stroke-opacity="0.9" stroke-width="3.0"/>
<rect x="797.5" y="317.65" width="211.20" height="14.9" fill="#ff7f19" stroke="#000" stroke-opacity="0.9" stroke-width="3.0"/>
<rect x="797.5" y="302.75" width="360.00" height="14.9" fill="#8b1a1a" stroke="#000" stroke-opacity="0.9" stroke-width="3.0"/>
<line x1="1070" y1="310.20" x2="1245" y2="310.20" stroke="#000" stroke-width="2"/>
<line x1="936.2" y1="325.10" x2="1081" y2="325.10" stroke="#000" stroke-width="2"/>
<line x1="1420" y1="340.00" x2="1579" y2="340.00" stroke="#000" stroke-width="2"/>
<line x1="1048" y1="354.90" x2="1214" y2="354.90" stroke="#000" stroke-width="2"/>
<line x1="1147" y1="369.80" x2="1323.7" y2="369.80" stroke="#000" stroke-width="2"/>
<rect x="797.5" y="510.75" width="407.00" height="14.9" fill="#1e2ffd" stroke="#000" stroke-opacity="0.9" stroke-width="3.0"/>
<rect x="797.5" y="495.85" width="334.00" height="14.9" fill="#28f5ec" stroke="#000" stroke-opacity="0.9" stroke-width="3.0"/>
<rect x="797.5" y="480.95" width="709.00" height="14.9" fill="#c4fd50" stroke="#000" stroke-opacity="0.9" stroke-width="3.0"/>
<rect x="797.5" y="466.05" width="192.00" height="14.9" fill="#ff7f19" stroke="#000" stroke-opacity="0.9" stroke-width="3.0"/>
<rect x="797.5" y="451.15" width="340.00" height="14.9" fill="#8b1a1a" stroke="#000" stroke-opacity="0.9" stroke-width="3.0"/>
<line x1="1076.2" y1="458.60" x2="1198" y2="458.60" stroke="#000" stroke-width="2"/>
<line x1="924.2" y1="473.50" x2="1054" y2="473.50" stroke="#000" stroke-width="2"/>
<line x1="1438" y1="488.40" x2="1575" y2="488.40" stroke="#000" stroke-width="2"/>
<line x1="1076.2" y1="503.30" x2="1186" y2="503.30" stroke="#000" stroke-width="2"/>
<line x1="1132" y1="518.20" x2="1276" y2="518.20" stroke="#000" stroke-width="2"/>
<rect x="797.5" y="659.65" width="459.00" height="14.9" fill="#1e2ffd" stroke="#000" stroke-opacity="0.9" stroke-width="3.0"/>
<rect x="797.5" y="644.75" width="380.50" height="14.9" fill="#28f5ec" stroke="#000" stroke-opacity="0.9" stroke-width="3.0"/>
<rect x="797.5" y="629.85" width="710.00" height="14.9" fill="#c4fd50" stroke="#000" stroke-opacity="0.9" stroke-width="3.0"/>
<rect x="797.5" y="614.95" width="218.00" height="14.9" fill="#ff7f19" stroke="#000" stroke-opacity="0.9" stroke-width="3.0"/>
<rect x="797.5" y="600.05" width="326.00" height="14.9" fill="#8b1a1a" stroke="#000" stroke-opacity="0.9" stroke-width="3.0"/>
<line x1="1035" y1="607.50" x2="1211" y2="607.50" stroke="#000" stroke-width="2"/>
<line x1="944" y1="622.40" x2="1087" y2="622.40" stroke="#000" stroke-width="2"/>
<line x1="1408" y1="637.30" x2="1607" y2="637.30" stroke="#000" stroke-width="2"/>
<line x1="1081.2" y1="652.20" x2="1274" y2="652.20" stroke="#000" stroke-width="2"/>
<line x1="1189.2" y1="667.10" x2="1323" y2="667.10" stroke="#000" stroke-width="2"/>
<rect x="797.5" y="808.65" width="396.00" height="14.9" fill="#1e2ffd" stroke="#000" stroke-opacity="0.9" stroke-width="3.0"/>
<rect x="797.5" y="793.75" width="345.00" height="14.9" fill="#28f5ec" stroke="#000" stroke-opacity="0.9" stroke-width="3.0"/>
<rect x="797.5" y="778.85" width="739.00" height="14.9" fill="#c4fd50" stroke="#000" stroke-opacity="0.9" stroke-width="3.0"/>
<rect x="797.5" y="763.95" width="242.00" height="14.9" fill="#ff7f19" stroke="#000" stroke-opacity="0.9" stroke-width="3.0"/>
<rect x="797.5" y="749.05" width="316.00" height="14.9" fill="#8b1a1a" stroke="#000" stroke-opacity="0.9" stroke-width="3.0"/>
<line x1="1040" y1="756.50" x2="1187" y2="756.50" stroke="#000" stroke-width="2"/>
<line x1="986" y1="771.40" x2="1092" y2="771.40" stroke="#000" stroke-width="2"/>
<line x1="1458" y1="786.30" x2="1614" y2="786.30" stroke="#000" stroke-width="2"/>
<line x1="1071.2" y1="801.20" x2="1213" y2="801.20" stroke="#000" stroke-width="2"/>
<line x1="1142" y1="816.10" x2="1245" y2="816.10" stroke="#000" stroke-width="2"/>
<rect x="797.5" y="957.65" width="455.00" height="14.9" fill="#1e2ffd" stroke="#000" stroke-opacity="0.9" stroke-width="3.0"/>
<rect x="797.5" y="942.75" width="371.00" height="14.9" fill="#28f5ec" stroke="#000" stroke-opacity="0.9" stroke-width="3.0"/>
<rect x="797.5" y="927.85" width="716.00" height="14.9" fill="#c4fd50" stroke="#000" stroke-opacity="0.9" stroke-width="3.0"/>
<rect x="797.5" y="912.95" width="185.00" height="14.9" fill="#ff7f19" stroke="#000" stroke-opacity="0.9" stroke-width="3.0"/>
<rect x="797.5" y="898.05" width="320.00" height="14.9" fill="#8b1a1a" stroke="#000" stroke-opacity="0.9" stroke-width="3.0"/>
<line x1="1051.2" y1="905.50" x2="1183" y2="905.50" stroke="#000" stroke-width="2"/>
<line x1="907" y1="920.40" x2="1058" y2="920.40" stroke="#000" stroke-width="2"/>
<line x1="1468" y1="935.30" x2="1557" y2="935.30" stroke="#000" stroke-width="2"/>
<line x1="1084" y1="950.20" x2="1251" y2="950.20" stroke="#000" stroke-width="2"/>
<line x1="1183" y1="965.10" x2="1321" y2="965.10" stroke="#000" stroke-width="2"/>
</g>
<rect x="797.5" y="265.5" width="858.20" height="743.90" fill="none" stroke="#000" stroke-width="1.25"/>
<line x1="797.50" y1="1009.4" x2="797.50" y2="1014.8" stroke="#000" stroke-width="1.25"/>
<text x="798.10" y="1031.2" font-size="14.6" text-anchor="middle" fill="#000">0</text>
<line x1="945.84" y1="1009.4" x2="945.84" y2="1014.8" stroke="#000" stroke-width="1.25"/>
<text x="946.44" y="1031.2" font-size="14.6" text-anchor="middle" fill="#000">2</text>
<line x1="1094.18" y1="1009.4" x2="1094.18" y2="1014.8" stroke="#000" stroke-width="1.25"/>
<text x="1094.78" y="1031.2" font-size="14.6" text-anchor="middle" fill="#000">4</text>
<line x1="1242.52" y1="1009.4" x2="1242.52" y2="1014.8" stroke="#000" stroke-width="1.25"/>
<text x="1243.12" y="1031.2" font-size="14.6" text-anchor="middle" fill="#000">6</text>
<line x1="1390.86" y1="1009.4" x2="1390.86" y2="1014.8" stroke="#000" stroke-width="1.25"/>
<text x="1391.46" y="1031.2" font-size="14.6" text-anchor="middle" fill="#000">8</text>
<line x1="1539.20" y1="1009.4" x2="1539.20" y2="1014.8" stroke="#000" stroke-width="1.25"/>
<text x="1539.80" y="1031.2" font-size="14.6" text-anchor="middle" fill="#000">10</text>
<line x1="792.3" y1="339.50" x2="797.5" y2="339.50" stroke="#000" stroke-width="1.2"/>
<text x="786.3" y="345.70" font-size="15.2" text-anchor="end" fill="#000">yellow</text>
<line x1="792.3" y1="487.90" x2="797.5" y2="487.90" stroke="#000" stroke-width="1.2"/>
<text x="786.3" y="494.10" font-size="15.2" text-anchor="end" fill="#000">red</text>
<line x1="792.3" y1="636.80" x2="797.5" y2="636.80" stroke="#000" stroke-width="1.2"/>
<text x="786.3" y="643.00" font-size="15.2" text-anchor="end" fill="#000">orange</text>
<line x1="792.3" y1="785.80" x2="797.5" y2="785.80" stroke="#000" stroke-width="1.2"/>
<text x="786.3" y="792.00" font-size="15.2" text-anchor="end" fill="#000">green</text>
<line x1="792.3" y1="934.80" x2="797.5" y2="934.80" stroke="#000" stroke-width="1.2"/>
<text x="786.3" y="941.00" font-size="15.2" text-anchor="end" fill="#000">blue</text>
<text transform="translate(730 640.6) rotate(-90)" font-size="15.2" text-anchor="middle" fill="#000">label</text>
<rect x="1589.3" y="272.4" width="59.3" height="109.3" rx="2.7" fill="#fff" fill-opacity="0.8" stroke="#cfcfcf" stroke-width="1.3"/>
<rect x="1595.5" y="279.50" width="27.8" height="9.4" fill="#1e2ffd" stroke="#000" stroke-opacity="0.9" stroke-width="3.0"/>
<text x="1635.3" y="289.10" font-size="15.2" fill="#000">a</text>
<rect x="1595.5" y="300.55" width="27.8" height="9.4" fill="#28f5ec" stroke="#000" stroke-opacity="0.9" stroke-width="3.0"/>
<text x="1635.3" y="310.15" font-size="15.2" fill="#000">b</text>
<rect x="1595.5" y="321.60" width="27.8" height="9.4" fill="#c4fd50" stroke="#000" stroke-opacity="0.9" stroke-width="3.0"/>
<text x="1635.3" y="331.20" font-size="15.2" fill="#000">c</text>
<rect x="1595.5" y="342.65" width="27.8" height="9.4" fill="#ff7f19" stroke="#000" stroke-opacity="0.9" stroke-width="3.0"/>
<text x="1635.3" y="352.25" font-size="15.2" fill="#000">d</text>
<rect x="1595.5" y="363.70" width="27.8" height="9.4" fill="#8b1a1a" stroke="#000" stroke-opacity="0.9" stroke-width="3.0"/>
<text x="1635.3" y="373.30" font-size="15.2" fill="#000">e</text>
</svg>
<div class="t optitle" style="left:1780px;top:105.9px">options</div>
<svg class="abs" style="left:1999px;top:109px" width="26" height="12" viewBox="0 0 26 12"><rect x="0.6" y="0.6" width="9.8" height="9.8" rx="2" fill="#f7f7f7" stroke="#5f5c58" stroke-width="1.1"/><path d="M4.6 4.4 V3.6 Q4.6 2.8 5.4 2.8 H7.6 Q8.4 2.8 8.4 3.6 V5.8 Q8.4 6.6 7.6 6.6 H6.8" fill="none" stroke="#5f5c58" stroke-width="1"/><rect x="2.7" y="4.5" width="4" height="4" rx="1" fill="#f7f7f7" stroke="#5f5c58" stroke-width="1"/><rect x="14.7" y="0.6" width="9.8" height="9.8" rx="2" fill="#f7f7f7" stroke="#5f5c58" stroke-width="1.1"/><path d="M16.7 2.6 L22.5 8.4 M22.5 2.6 L16.7 8.4" stroke="#5f5c58" stroke-width="1.9" fill="none"/></svg>
<div style="left:1837.5px;top:125px;width:49.5px;height:28px;background:#dcdbd9;border-right:1px solid #c9c8c6;box-sizing:border-box;"></div>
<div style="left:1887px;top:125px;width:42.8px;height:28px;background:#dcdbd9;"></div>
<div style="left:1777px;top:153px;width:247.5px;height:904px;border:1px solid #bcbbb9;box-sizing:border-box;"></div>
<div style="left:1776px;top:125px;width:61.5px;height:28px;background:#eff0f1;border:1px solid #bcbbb9;border-bottom:none;box-sizing:border-box;border-radius:2px 2px 0 0;"></div>
<div style="left:1776px;top:152.5px;width:248.5px;height:1px;background:#bcbbb9;"></div>
<div class="t otab" style="left:1782px;top:132px">general</div>
<div class="t otab" style="left:1842.5px;top:132px">labels</div>
<div class="t otab" style="left:1893.5px;top:132px">axes</div>
<div class="t opt" style="left:1809px;top:192.6px">plot type</div>
<div class="field" style="left:1900.2px;top:185px;width:92.5px;height:24.5px;"><span style="left:3px">barh</span></div>
<div class="t opt" style="left:1809px;top:222.6px">bins</div>
<div class="field" style="left:1900.2px;top:215px;width:92.5px;height:24.5px;"><span style="left:4.5px">20</span></div>
<div class="t opt" style="left:1809px;top:246.45000000000002px">stacked</div>
<div class="chk" style="left:1900.3px;top:245.3px;width:13.5px;height:13.5px;"></div>
<div class="t opt" style="left:1809px;top:266.45px">multiple subplot</div>
<div class="chk" style="left:1900.3px;top:265.3px;width:13.5px;height:13.5px;"></div>
<div class="t opt" style="left:1809px;top:286.45px">use index</div>
<div class="chk" style="left:1900.3px;top:285.3px;width:13.5px;height:13.5px;"><svg width="14" height="14" viewBox="0 0 14 14" style="position:absolute;left:-1px;top:-1px"><path d="M3.3 7.4 L6.4 11.6 L10.7 2.7" fill="none" stroke="#1f2225" stroke-width="2.1"/></svg></div>
<div class="t opt" style="left:1809px;top:306.45px">errorbar column</div>
<div class="chk" style="left:1900.3px;top:305.3px;width:13.5px;height:13.5px;"></div>
<div class="t opt" style="left:1809px;top:362.2px">group by</div>
<div class="field" style="left:1904.2px;top:355.2px;width:88.5px;height:24.5px;"><span style="left:3px">label</span></div>
<div class="t opt" style="left:1809px;top:392.2px">group by 2</div>
<div class="field" style="left:1904.2px;top:385.2px;width:88.5px;height:24.5px;"></div>
<div class="t opt" style="left:1809px;top:422.2px">point labels</div>
<div class="field" style="left:1904.2px;top:415.2px;width:88.5px;height:24.5px;"></div>
<div class="t opt" style="left:1809px;top:452.2px">point sizes</div>
<div class="field" style="left:1904.2px;top:445.2px;width:88.5px;height:24.5px;"></div>
<div class="t opt" style="left:1809px;top:527.4499999999999px">show grid</div>
<div class="chk" style="left:1904.2px;top:526.3px;width:13.5px;height:13.5px;"></div>
<div class="t opt" style="left:1809px;top:547.4799999999999px">legend</div>
<div class="chk" style="left:1904.2px;top:546.3299999999999px;width:13.5px;height:13.5px;"><svg width="14" height="14" viewBox="0 0 14 14" style="position:absolute;left:-1px;top:-1px"><path d="M3.3 7.4 L6.4 11.6 L10.7 2.7" fill="none" stroke="#1f2225" stroke-width="2.1"/></svg></div>
<div class="t opt" style="left:1809px;top:567.5099999999999px">x tick labels</div>
<div class="chk" style="left:1904.2px;top:566.3599999999999px;width:13.5px;height:13.5px;"><svg width="14" height="14" viewBox="0 0 14 14" style="position:absolute;left:-1px;top:-1px"><path d="M3.3 7.4 L6.4 11.6 L10.7 2.7" fill="none" stroke="#1f2225" stroke-width="2.1"/></svg></div>
<div class="t opt" style="left:1809px;top:587.54px">y tick labels</div>
<div class="chk" style="left:1904.2px;top:586.39px;width:13.5px;height:13.5px;"><svg width="14" height="14" viewBox="0 0 14 14" style="position:absolute;left:-1px;top:-1px"><path d="M3.3 7.4 L6.4 11.6 L10.7 2.7" fill="none" stroke="#1f2225" stroke-width="2.1"/></svg></div>
<div class="t opt" style="left:1809px;top:607.5699999999999px">share x</div>
<div class="chk" style="left:1904.2px;top:606.42px;width:13.5px;height:13.5px;"></div>
<div class="t opt" style="left:1809px;top:627.5999999999999px">share y</div>
<div class="chk" style="left:1904.2px;top:626.4499999999999px;width:13.5px;height:13.5px;"></div>
<div class="t opt" style="left:1809px;top:647.63px">log x</div>
<div class="chk" style="left:1904.2px;top:646.48px;width:13.5px;height:13.5px;"></div>
<div class="t opt" style="left:1809px;top:667.66px">log y</div>
<div class="chk" style="left:1904.2px;top:666.51px;width:13.5px;height:13.5px;"></div>
<div class="t opt" style="left:1809px;top:706.6999999999999px">marker</div>
<div class="field" style="left:1876px;top:700.1px;width:117px;height:24.5px;"></div>
<div class="t opt" style="left:1809px;top:735.1px">marker size</div>
<div class="t opt" style="left:1809px;top:761.6999999999999px">linestyle</div>
<div class="field" style="left:1876px;top:755.2px;width:117px;height:24.5px;"><span style="left:4px">-</span></div>
<div class="t opt" style="left:1809px;top:790.1px">line width</div>
<div class="t opt" style="left:1809px;top:816.6999999999999px">alpha</div>
<div class="field" style="left:1876px;top:810.1px;width:117px;height:24.5px;"><span style="left:6px">9</span></div>
<div style="left:1876px;top:737.8px;width:117px;height:5px;background:#bbbdc1;border-radius:2.5px;"></div>
<div style="left:1876px;top:737.8px;width:12px;height:5px;background:#34a3e1;border-radius:2.5px 0 0 2.5px;"></div>
<div style="left:1881.5px;top:732.8px;width:13px;height:15px;background:#dbd9d7;border:1px solid #bcc0c7;border-radius:6.5px;box-sizing:border-box;"></div>
<div style="left:1876px;top:792.8px;width:117px;height:5px;background:#bbbdc1;border-radius:2.5px;"></div>
<div style="left:1876px;top:792.8px;width:27.5px;height:5px;background:#34a3e1;border-radius:2.5px 0 0 2.5px;"></div>
<div style="left:1897.0px;top:787.8px;width:13px;height:15px;background:#dbd9d7;border:1px solid #bcc0c7;border-radius:6.5px;box-sizing:border-box;"></div>
<div class="t opt" style="left:1809px;top:876.9px">style</div>
<div class="field" style="left:1874px;top:870px;width:119px;height:24.5px;"><span style="left:3px">default</span></div>
<div class="t opt" style="left:1809px;top:906.9px">colormap</div>
<div class="field" style="left:1874px;top:900px;width:119px;height:24.5px;"><span style="left:3px">jet</span></div>
<div class="t opt" style="left:1809px;top:932.0px">black &amp; whi</div>
<div class="chk" style="left:1874.2px;top:930.4px;width:13.5px;height:13.5px;"></div>
<div class="t opt" style="left:1809px;top:956.9px">color by val</div>
<div class="field" style="left:1874px;top:950.1px;width:119px;height:24.5px;"></div>
<div class="t opt" style="left:1809px;top:986.9px">color scale</div>
<div class="field" style="left:1874px;top:980.2px;width:119px;height:24.5px;"><span style="left:3px">linear</span></div>
<div class="t opt" style="left:1809px;top:1012.0px">show colorl</div>
<div class="chk" style="left:1874.2px;top:1010.2px;width:13.5px;height:13.5px;"></div>
<div class="t status" style="left:2px;top:1077.1px">test.txpl</div>
</div></body></html>
